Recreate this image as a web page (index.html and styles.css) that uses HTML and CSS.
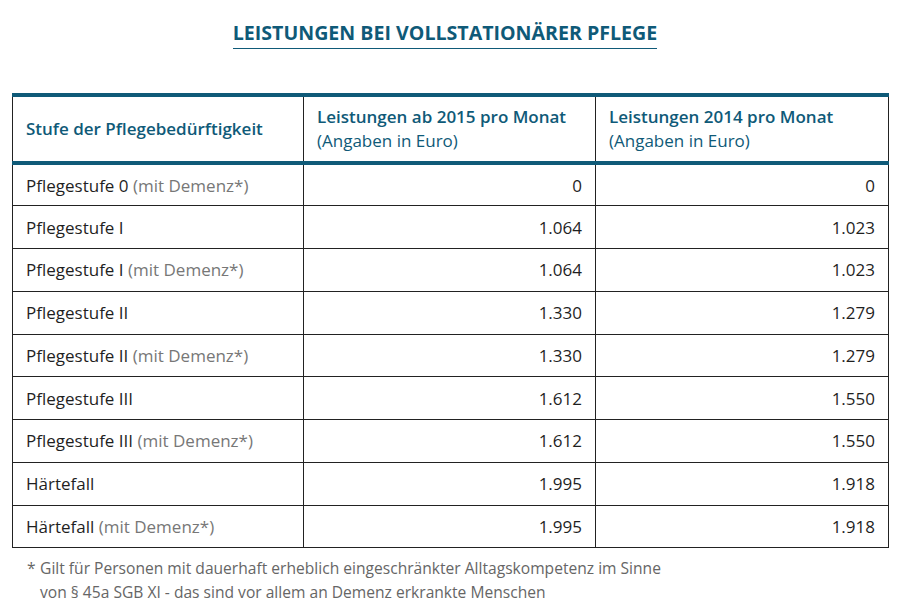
FILE: index.html
```html
<!DOCTYPE html>
<html lang="de">
<head>
<meta charset="utf-8">
<link rel="stylesheet" href="styles.css">
</head>
<body>
<div class="page">
  <h1 class="title"><span>LEISTUNGEN BEI VOLLSTATIONÄRER PFLEGE</span></h1>
  <table class="tbl">
    <colgroup><col class="c1"><col class="c2"><col class="c3"></colgroup>
    <thead>
      <tr>
        <th>Stufe der Pflegebedürftigkeit</th>
        <th>Leistungen ab 2015 pro Monat<br><span class="sub">(Angaben in Euro)</span></th>
        <th>Leistungen 2014 pro Monat<br><span class="sub">(Angaben in Euro)</span></th>
      </tr>
    </thead>
    <tbody>
      <tr><td>Pflegestufe 0 <span class="note">(mit Demenz*)</span></td><td class="num">0</td><td class="num">0</td></tr>
      <tr><td>Pflegestufe I</td><td class="num">1.064</td><td class="num">1.023</td></tr>
      <tr><td>Pflegestufe I <span class="note">(mit Demenz*)</span></td><td class="num">1.064</td><td class="num">1.023</td></tr>
      <tr><td>Pflegestufe II</td><td class="num">1.330</td><td class="num">1.279</td></tr>
      <tr><td>Pflegestufe II <span class="note">(mit Demenz*)</span></td><td class="num">1.330</td><td class="num">1.279</td></tr>
      <tr><td>Pflegestufe III</td><td class="num">1.612</td><td class="num">1.550</td></tr>
      <tr><td>Pflegestufe III <span class="note">(mit Demenz*)</span></td><td class="num">1.612</td><td class="num">1.550</td></tr>
      <tr><td>Härtefall</td><td class="num">1.995</td><td class="num">1.918</td></tr>
      <tr><td>Härtefall <span class="note">(mit Demenz*)</span></td><td class="num">1.995</td><td class="num">1.918</td></tr>
    </tbody>
  </table>
  <p class="foot"><span class="star">*</span> Gilt für Personen mit dauerhaft erheblich eingeschränkter Alltagskompetenz im Sinne<br>von § 45a SGB XI - das sind vor allem an Demenz erkrankte Menschen</p>
</div>
</body>
</html>
```

FILE: styles.css
```css
html, body {
  margin: 0;
  padding: 0;
  background: #ffffff;
}
body {
  font-family: "Open Sans", "Noto Sans", sans-serif;
  color: #1f1f1f;
}
.page {
  width: 905px;
  padding: 0 0 0 12px;
  box-sizing: border-box;
}
.title {
  margin: 0;
  padding-top: 19px;
  text-align: center;
  font-size: 19.6px;
  font-weight: 700;
  color: #0f5a78;
  letter-spacing: 0;
  line-height: 27px;
  height: 93px;
  box-sizing: border-box;
  padding-right: 27px;
}
.title span {
  display: inline-block;
  border-bottom: 1.5px solid #0f5a78;
  padding-bottom: 2px;
}
.tbl {
  border-collapse: collapse;
  width: 876px;
  table-layout: fixed;
}
.c1 { width: 291px; }
.c2 { width: 292px; }
.c3 { width: 293px; }
.tbl th {
  text-align: left;
  vertical-align: middle;
  color: #0f5a78;
  font-weight: 600;
  font-size: 17px;
  line-height: 24px;
  height: 68px;
  padding: 0 13px;
  border-left: 1px solid #222;
  border-right: 1px solid #222;
  border-top: 4px solid #0f5a78;
  border-bottom: 4px solid #0f5a78;
  box-sizing: border-box;
}
.tbl th .sub {
  font-weight: 400;
}
.tbl td {
  font-size: 17px;
  height: 42.75px;
  padding: 0 13px;
  border: 1px solid #222;
  box-sizing: border-box;
  vertical-align: middle;
}
.tbl td.num {
  text-align: right;
}
.note {
  color: #777;
}
.foot {
  margin: 8px 0 0 15px;
  font-size: 15.6px;
  line-height: 24px;
  color: #666;
  padding-left: 13px;
  text-indent: -13px;
}
.star {
  display: inline-block;
  width: 9px;
  text-indent: 0;
}
```
